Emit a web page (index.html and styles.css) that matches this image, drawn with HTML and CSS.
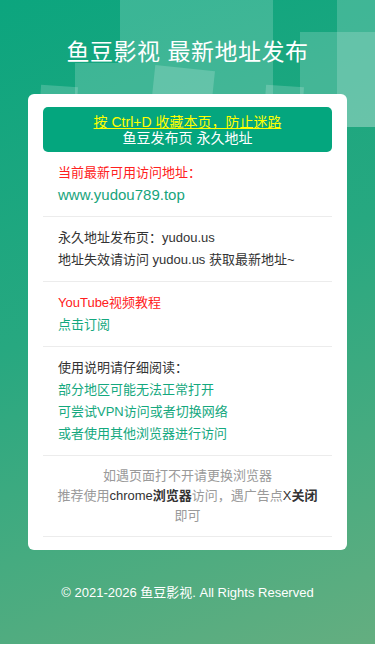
FILE: index.html
```html
<!DOCTYPE html>
<html lang="zh-CN">
<head>
<meta charset="utf-8">
<meta name="viewport" content="width=device-width, initial-scale=1">
<title>鱼豆影视 最新地址发布</title>
<link rel="stylesheet" href="styles.css">
</head>
<body>
<div class="page">
  <ul class="bubbles" aria-hidden="true">
    <li class="b1"></li>
    <li class="b2"></li>
    <li class="b3"></li>
    <li class="b4"></li>
    <li class="b5"></li>
    <li class="b6"></li>
    <li class="b7"></li>
  </ul>
  <h1 class="title">鱼豆影视 最新地址发布</h1>
  <main class="card">
    <div class="notice">
      <a class="notice-link" href="#">按 Ctrl+D 收藏本页，防止迷路</a>
      <div class="notice-sub">鱼豆发布页 永久地址</div>
    </div>
    <section class="item">
      <div class="red">当前最新可用访问地址：</div>
      <div class="url">www.yudou789.top</div>
    </section>
    <section class="item">
      <div class="dark">永久地址发布页：yudou.us</div>
      <div class="dark">地址失效请访问 yudou.us 获取最新地址~</div>
    </section>
    <section class="item">
      <div class="red">YouTube视频教程</div>
      <div class="green">点击订阅</div>
    </section>
    <section class="item">
      <div class="dark">使用说明请仔细阅读：</div>
      <div class="green">部分地区可能无法正常打开</div>
      <div class="green">可尝试VPN访问或者切换网络</div>
      <div class="green">或者使用其他浏览器进行访问</div>
    </section>
    <section class="item item-center">
      <div>如遇页面打不开请更换浏览器</div>
      <div>推荐使用<span class="em">chrome</span><b class="em">浏览器</b>访问，遇广告点<span class="em">X</span><b class="em">关闭</b>即可</div>
    </section>
  </main>
  <footer class="footer">© 2021-2026 鱼豆影视. All Rights Reserved</footer>
</div>
</body>
</html>
```
FILE: styles.css
```css
html, body {
  margin: 0;
  padding: 0;
  background: #ffffff;
}

body {
  font-family: "Liberation Sans", Arial, "Noto Sans CJK SC", sans-serif;
  color: #333333;
}

.page {
  position: relative;
  overflow: hidden;
  height: 644px;
  box-sizing: border-box;
  padding-top: 38px;
  background: linear-gradient(160deg, #0ca57e 0%, #27a880 45%, #64ae80 100%);
}

.bubbles {
  list-style: none;
  margin: 0;
  padding: 0;
}

.bubbles li {
  position: absolute;
  background: rgba(255, 255, 255, 0.18);
}

.b1 { left: 120px; top: -30px; width: 153px; height: 190px; }
.b2 { left: 337px; top: -20px; width: 60px; height: 147px; }
.b3 { left: 300px; top: 32px; width: 95px; height: 95px; }
.b4 { left: 75px; top: 63px; width: 45px; height: 50px; }
.b5 { left: 152px; top: 68px; width: 60px; height: 60px; transform: rotate(6deg); background: rgba(255, 255, 255, 0.2); }
.b6 { left: 40px; top: 86px; width: 37px; height: 30px; transform: rotate(4deg); }
.b7 { left: 265px; top: 86px; width: 38px; height: 30px; transform: rotate(4deg); }

.title {
  position: relative;
  margin: 0 0 28px;
  font-size: 23px;
  line-height: 28px;
  font-weight: 400;
  color: #ffffff;
  text-align: center;
  letter-spacing: 0.5px;
}

.card {
  position: relative;
  margin: 0 28px;
  padding: 13px 15px;
  background: #ffffff;
  border-radius: 6px;
}

.notice {
  padding: 7px 8px 6px;
  background: #04a67e;
  border-radius: 5px;
  text-align: center;
  font-size: 14px;
  line-height: 16px;
}

.notice-link {
  color: #ffff00;
  text-decoration: underline;
}

.notice-sub {
  color: #ffffff;
}

.item {
  padding: 10px 15px;
  border-bottom: 1px solid #ececec;
  font-size: 13px;
  line-height: 22px;
}

.red {
  color: #ff2020;
}

.url {
  color: #17a47c;
  font-size: 15px;
}

.dark {
  color: #333333;
}

.green {
  color: #14a87e;
}

.item-center {
  padding: 10px 10px;
  text-align: center;
  line-height: 20px;
  color: #9a9a9a;
}

.item-center .em {
  color: #333333;
  white-space: nowrap;
}

.item-center b.em {
  font-weight: bold;
}

.footer {
  position: relative;
  margin-top: 33px;
  text-align: center;
  color: #ffffff;
  font-size: 13px;
  line-height: 20px;
}
```
